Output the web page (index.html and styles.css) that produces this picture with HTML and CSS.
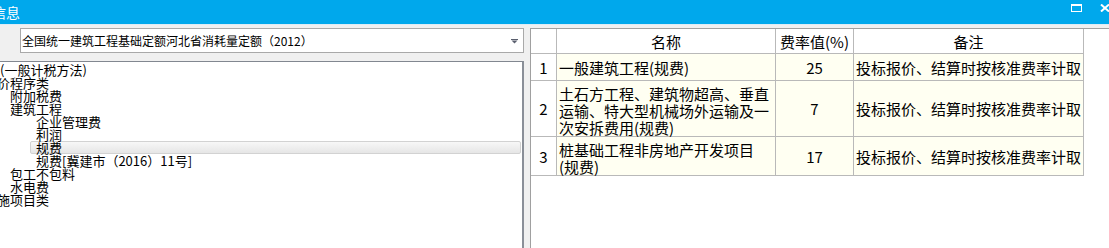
FILE: index.html
```html
<!DOCTYPE html>
<html lang="zh-CN">
<head>
<meta charset="utf-8">
<title>信息</title>
<link rel="stylesheet" href="styles.css">
</head>
<body>
<div class="titlebar">
  <span class="title">信息</span>
  <div class="wincontrols">
    <svg class="ico-max" width="11" height="8" viewBox="0 0 11 8"><rect x="0.5" y="1" width="10" height="6.5" fill="none" stroke="#fff" stroke-width="1"/><rect x="0" y="0" width="11" height="2" fill="#fff"/></svg>
    <svg class="ico-close" width="10" height="8" viewBox="0 0 10 8"><path d="M1 0.5 L9 7.5 M9 0.5 L1 7.5" stroke="#fff" stroke-width="2" fill="none"/></svg>
  </div>
</div>
<div class="main">
  <div class="leftcol">
    <div class="combo">
      <span class="combo-text">全国统一建筑工程基础定额河北省消耗量定额（2012）</span>
      <svg class="combo-arrow" width="7" height="5" viewBox="0 0 7 5"><rect x="0" y="0" width="7" height="1" fill="#5a5f6e"/><path d="M0.5 1.5 L6.5 1.5 L3.5 4.5 Z" fill="#5a5f6e"/></svg>
    </div>
    <div class="tree">
      <div class="node l0a">(一般计税方法)</div>
      <div class="node l0">计价程序类</div>
      <div class="node l1">附加税费</div>
      <div class="node l1">建筑工程</div>
      <div class="node l2">企业管理费</div>
      <div class="node l2">利润</div>
      <div class="node l2 selected">规费</div>
      <div class="node l2">规费[冀建市（2016）11号]</div>
      <div class="node l1">包工不包料</div>
      <div class="node l1">水电费</div>
      <div class="node l0">措施项目类</div>
    </div>
  </div>
  <div class="rightpanel">
    <div class="grid">
      <div class="c hd num"></div>
      <div class="c hd center">名称</div>
      <div class="c hd center">费率值(%)</div>
      <div class="c hd center">备注</div>

      <div class="c num r1">1</div>
      <div class="c data r1 name">一般建筑工程(规费)</div>
      <div class="c data r1 center">25</div>
      <div class="c data r1 note">投标报价、结算时按核准费率计取</div>

      <div class="c num r2">2</div>
      <div class="c data r2 name">土石方工程、建筑物超高、垂直<br>运输、特大型机械场外运输及一<br>次安拆费用(规费)</div>
      <div class="c data r2 center">7</div>
      <div class="c data r2 note">投标报价、结算时按核准费率计取</div>

      <div class="c num r3">3</div>
      <div class="c data r3 name">桩基础工程非房地产开发项目<br>(规费)</div>
      <div class="c data r3 center">17</div>
      <div class="c data r3 note">投标报价、结算时按核准费率计取</div>
    </div>
  </div>
</div>
</body>
</html>
```

FILE: styles.css
```css
* { box-sizing: border-box; }
html, body {
  margin: 0;
  padding: 0;
  width: 1109px;
  height: 248px;
  overflow: hidden;
  background: #f0f0f0;
  font-family: "Noto Sans CJK SC", "Noto Sans", sans-serif;
  color: #000;
}
.titlebar {
  height: 25px;
  background: #00a8ec;
  border-bottom: 1px solid #dcecf6;
  display: flex;
  align-items: center;
  justify-content: space-between;
}
.title {
  color: #fff;
  font-size: 14px;
  margin-left: -8px;
  line-height: 20px;
}
.wincontrols {
  display: flex;
  align-items: center;
  gap: 18px;
  margin-right: -1px;
  margin-top: -8px;
}
.ico-max, .ico-close { display: block; }
.main {
  display: flex;
  height: 223px;
  padding-top: 3px;
}
.leftcol {
  width: 524px;
  display: flex;
  flex-direction: column;
}
.combo {
  margin-left: 20px;
  height: 25px;
  border: 1px solid #a9a9a9;
  background: #fff;
  display: flex;
  align-items: center;
  justify-content: space-between;
  padding: 0 5px 0 1px;
}
.combo-text {
  font-size: 12px;
  line-height: 16px;
}
.combo-arrow { display: block; margin-top: 1px; }
.tree {
  margin-top: 8px;
  margin-left: -20px;
  flex: 1;
  background: #fff;
  border: 1px solid #828790;
  border-right: 2px solid #8a8f98;
  border-bottom: none;
  padding-top: 1px;
  font-size: 13px;
}
.node {
  height: 13px;
  line-height: 13px;
  white-space: nowrap;
}
.l0a { padding-left: 19px; }
.l0 { padding-left: 3px; }
.l1 { padding-left: 29px; }
.l2 { padding-left: 55px; }
.node.selected {
  margin-left: 49px;
  padding-left: 5px;
  margin-right: 1px;
  background: linear-gradient(#f7f7f7, #e6e6e6);
  border: 1px solid #d2d2d2;
  border-radius: 2px;
  line-height: 11px;
}
.rightpanel {
  margin-left: 6px;
  margin-right: -10px;
  flex: 1;
  background: #fff;
  border-left: 1px solid #a0a0a0;
  border-top: 1px solid #a0a0a0;
}
.grid {
  display: grid;
  grid-template-columns: 26px 219px 78px 230px;
  grid-template-rows: 25px 27px 56px 39px;
  font-size: 15px;
}
.c {
  border-right: 1px solid #b9b9b9;
  border-bottom: 1px solid #b9b9b9;
  display: flex;
  align-items: center;
  line-height: 17px;
  white-space: nowrap;
}
.hd { background: #fff; justify-content: center; }
.num { background: #fff; justify-content: center; }
.data { background: #fffff2; }
.center { justify-content: center; }
.name { padding-left: 2px; padding-top: 3px; }
.r1.name { padding-top: 0; }
.note { padding-left: 2px; }
```
